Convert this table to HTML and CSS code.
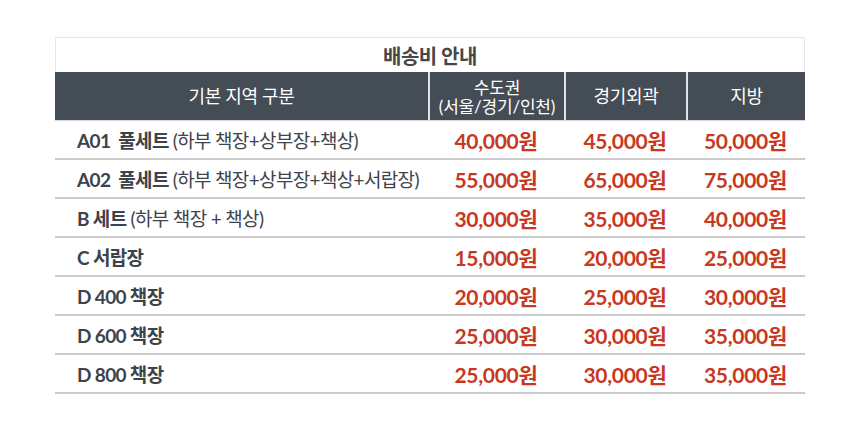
FILE: index.html
```html
<!DOCTYPE html>
<html lang="ko">
<head>
<meta charset="utf-8">
<title>배송비 안내</title>
<link rel="stylesheet" href="styles.css">
</head>
<body>
<div class="wrap">
  <div class="fee">
    <div class="title">배송비 안내</div>
    <div class="row head">
      <div class="cell name">기본 지역 구분</div>
      <div class="cell metro">수도권<br>(서울/경기/인천)</div>
      <div class="cell">경기외곽</div>
      <div class="cell">지방</div>
    </div>
    <div class="row">
      <div class="cell name"><b>A01&nbsp; 풀세트</b> <span class="sub">(하부 책장+상부장+책상)</span></div>
      <div class="cell price">40,000원</div>
      <div class="cell price">45,000원</div>
      <div class="cell price">50,000원</div>
    </div>
    <div class="row">
      <div class="cell name"><b>A02&nbsp; 풀세트</b> <span class="sub">(하부 책장+상부장+책상+서랍장)</span></div>
      <div class="cell price">55,000원</div>
      <div class="cell price">65,000원</div>
      <div class="cell price">75,000원</div>
    </div>
    <div class="row">
      <div class="cell name"><b>B 세트</b> <span class="sub">(하부 책장 + 책상)</span></div>
      <div class="cell price">30,000원</div>
      <div class="cell price">35,000원</div>
      <div class="cell price">40,000원</div>
    </div>
    <div class="row">
      <div class="cell name"><b>C 서랍장</b></div>
      <div class="cell price">15,000원</div>
      <div class="cell price">20,000원</div>
      <div class="cell price">25,000원</div>
    </div>
    <div class="row">
      <div class="cell name"><b>D 400 책장</b></div>
      <div class="cell price">20,000원</div>
      <div class="cell price">25,000원</div>
      <div class="cell price">30,000원</div>
    </div>
    <div class="row">
      <div class="cell name"><b>D 600 책장</b></div>
      <div class="cell price">25,000원</div>
      <div class="cell price">30,000원</div>
      <div class="cell price">35,000원</div>
    </div>
    <div class="row">
      <div class="cell name"><b>D 800 책장</b></div>
      <div class="cell price">25,000원</div>
      <div class="cell price">30,000원</div>
      <div class="cell price">35,000원</div>
    </div>
  </div>
</div>
</body>
</html>
```
FILE: styles.css
```css
html, body {
  margin: 0;
  padding: 0;
  background: #ffffff;
}
body {
  font-family: "Lato", "Noto Sans CJK KR", sans-serif;
  color: #3d434b;
}
.wrap {
  padding: 37px 0 0 55px;
}
.fee {
  width: 750px;
}
.title {
  height: 34px;
  border: 1px solid #e6e6e6;
  border-bottom: none;
  display: flex;
  align-items: center;
  justify-content: center;
  font-size: 20px;
  font-weight: 700;
  color: #474747;
  letter-spacing: -0.5px;
}
.row {
  display: grid;
  grid-template-columns: 373px 136px 122px 119px;
  height: 37px;
  border-bottom: 2px solid #cbcbcb;
}
.cell {
  display: flex;
  align-items: center;
  justify-content: center;
  text-align: center;
}
.head {
  height: 48px;
  background: #444c55;
  color: #ffffff;
  font-size: 18px;
  line-height: 19px;
  border-bottom: 1px solid #d6d6d6;
  letter-spacing: -0.3px;
}
.head .cell + .cell {
  border-left: 2px solid #e4e4e4;
}
.head .metro {
  font-size: 17px;
  letter-spacing: -0.2px;
  padding-top: 2px;
}
.row:not(.head) .name {
  justify-content: flex-start;
  padding-left: 22px;
  font-size: 19px;
  letter-spacing: -0.65px;
}
.head .name {
  justify-content: center;
}
.name b {
  font-weight: 700;
  white-space: pre;
}
.sub {
  margin-left: 4px;
  font-weight: 400;
}
.price {
  color: #c8381e;
  font-size: 21px;
  font-weight: 700;
  letter-spacing: -0.3px;
}
```
